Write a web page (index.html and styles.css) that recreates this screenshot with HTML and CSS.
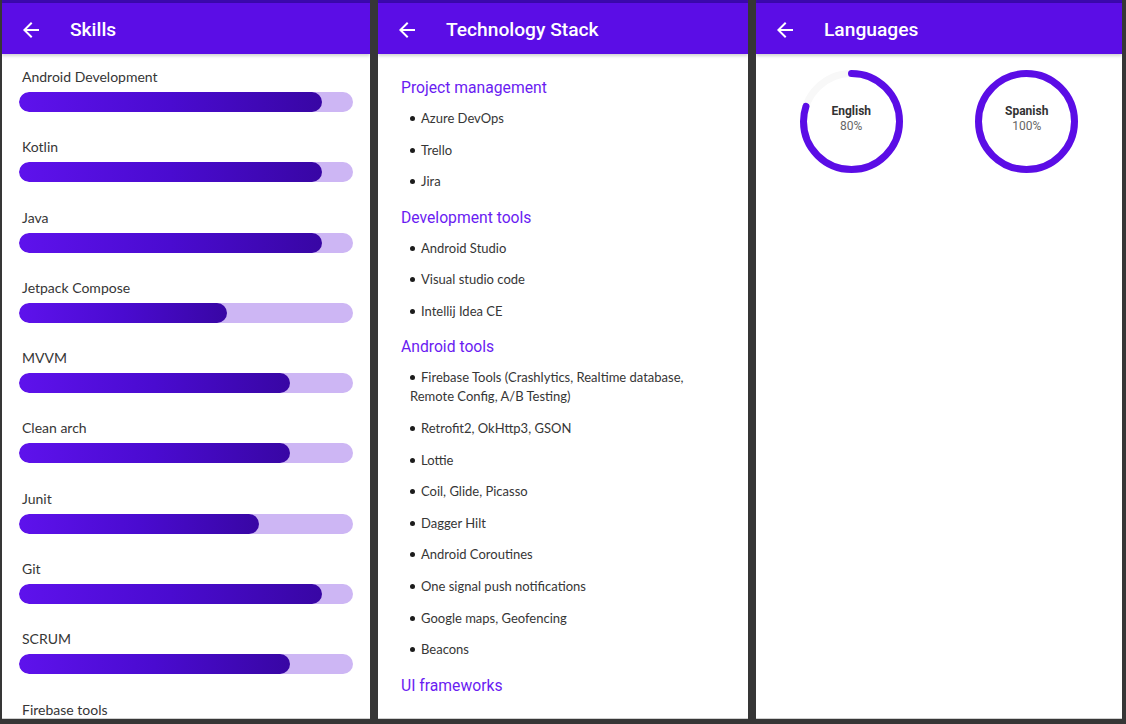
FILE: index.html
```html
<!DOCTYPE html>
<html lang="en">
<head>
<meta charset="utf-8">
<title>Portfolio screens</title>
<link rel="stylesheet" href="styles.css">
</head>
<body>
<div class="screens">
  <section class="panel panel-skills">
    <div class="status"></div>
    <header class="appbar">
      <svg class="back" width="24" height="24" viewBox="0 0 24 24"><path fill="#fff" d="M20 11H7.83l5.59-5.59L12 4l-8 8 8 8 1.41-1.41L7.83 13H20v-2z"/></svg>
      <h1 class="title">Skills</h1>
    </header>
    <div class="skills">
      <div class="skill"><div class="skill-name">Android Development</div><div class="track"><div class="fill" style="width:302.6px"></div></div></div>
      <div class="skill"><div class="skill-name">Kotlin</div><div class="track"><div class="fill" style="width:302.6px"></div></div></div>
      <div class="skill"><div class="skill-name">Java</div><div class="track"><div class="fill" style="width:302.6px"></div></div></div>
      <div class="skill"><div class="skill-name">Jetpack Compose</div><div class="track"><div class="fill" style="width:208.4px"></div></div></div>
      <div class="skill"><div class="skill-name">MVVM</div><div class="track"><div class="fill" style="width:271.2px"></div></div></div>
      <div class="skill"><div class="skill-name">Clean arch</div><div class="track"><div class="fill" style="width:271.2px"></div></div></div>
      <div class="skill"><div class="skill-name">Junit</div><div class="track"><div class="fill" style="width:239.8px"></div></div></div>
      <div class="skill"><div class="skill-name">Git</div><div class="track"><div class="fill" style="width:302.6px"></div></div></div>
      <div class="skill"><div class="skill-name">SCRUM</div><div class="track"><div class="fill" style="width:271.2px"></div></div></div>
      <div class="skill"><div class="skill-name">Firebase tools</div><div class="track"><div class="fill" style="width:271.2px"></div></div></div>
    </div>
  </section>

  <section class="panel panel-stack">
    <div class="status"></div>
    <header class="appbar">
      <svg class="back" width="24" height="24" viewBox="0 0 24 24"><path fill="#fff" d="M20 11H7.83l5.59-5.59L12 4l-8 8 8 8 1.41-1.41L7.83 13H20v-2z"/></svg>
      <h1 class="title">Technology Stack</h1>
    </header>
    <div class="stack">
      <h2 class="group">Project management</h2>
      <ul class="items">
        <li>Azure DevOps</li>
        <li>Trello</li>
        <li>Jira</li>
      </ul>
      <h2 class="group">Development tools</h2>
      <ul class="items">
        <li>Android Studio</li>
        <li>Visual studio code</li>
        <li>Intellij Idea CE</li>
      </ul>
      <h2 class="group">Android tools</h2>
      <ul class="items">
        <li>Firebase Tools (Crashlytics, Realtime database, Remote Config, A/B Testing)</li>
        <li>Retrofit2, OkHttp3, GSON</li>
        <li>Lottie</li>
        <li>Coil, Glide, Picasso</li>
        <li>Dagger Hilt</li>
        <li>Android Coroutines</li>
        <li>One signal push notifications</li>
        <li>Google maps, Geofencing</li>
        <li>Beacons</li>
      </ul>
      <h2 class="group">UI frameworks</h2>
    </div>
  </section>

  <section class="panel panel-lang">
    <div class="status"></div>
    <header class="appbar">
      <svg class="back" width="24" height="24" viewBox="0 0 24 24"><path fill="#fff" d="M20 11H7.83l5.59-5.59L12 4l-8 8 8 8 1.41-1.41L7.83 13H20v-2z"/></svg>
      <h1 class="title">Languages</h1>
    </header>
    <div class="langs">
      <div class="lang">
        <svg class="ring" width="103" height="103" viewBox="0 0 103 103">
          <circle class="ring-track" cx="51.5" cy="51.5" r="48"/>
          <circle class="ring-value" cx="51.5" cy="51.5" r="48" stroke-dasharray="241.3 400" transform="rotate(-90 51.5 51.5)"/>
        </svg>
        <div class="lang-text"><div class="lang-name">English</div><div class="lang-pct">80%</div></div>
      </div>
      <div class="lang">
        <svg class="ring" width="103" height="103" viewBox="0 0 103 103">
          <circle class="ring-track" cx="51.5" cy="51.5" r="48"/>
          <circle class="ring-value" cx="51.5" cy="51.5" r="48" stroke-dasharray="301.6 400" transform="rotate(-90 51.5 51.5)"/>
        </svg>
        <div class="lang-text"><div class="lang-name">Spanish</div><div class="lang-pct">100%</div></div>
      </div>
    </div>
  </section>
</div>
</body>
</html>
```

FILE: styles.css
```css
* { box-sizing: border-box; }
html, body { margin: 0; padding: 0; }
body {
  background: #363636;
  width: 1126px;
  height: 724px;
  overflow: hidden;
  font-family: Roboto, "Liberation Sans", sans-serif;
}
.screens {
  display: flex;
  gap: 8px;
  padding-left: 2px;
}
.panel {
  background: #fff;
  height: 719px;
  overflow: hidden;
  border-bottom: 1px solid #cfcfcf;
  display: flex;
  flex-direction: column;
}
.panel-skills { width: 368px; }
.panel-stack { width: 370px; }
.panel-lang { width: 366px; }

.status {
  height: 3px;
  background: #3a08ac;
  flex: none;
}
.appbar {
  height: 51px;
  flex: none;
  background: #5b0de6;
  display: flex;
  align-items: center;
  padding-left: 17px;
  box-shadow: 0 2px 3px rgba(0,0,0,0.18);
  position: relative;
  z-index: 1;
}
.back { display: block; flex: none; margin-top: 2px; }
.title {
  margin: 0 0 0 27px;
  color: #fff;
  font-family: Roboto, sans-serif;
  font-weight: 500;
  font-size: 19.2px;
  line-height: 24px;
  padding-top: 3px;
}

/* Skills */
.skills {
  padding: 14px 17px 0 17px;
}
.skill {
  height: 70.3px;
}
.skill-name {
  font-family: Lato, "Open Sans", sans-serif;
  font-size: 14px;
  line-height: 18px;
  color: #363636;
  padding-left: 3px;
  margin-bottom: 6px;
}
.track {
  height: 20px;
  border-radius: 10px;
  background: #cdb6f4;
  overflow: hidden;
}
.fill {
  height: 20px;
  border-radius: 10px;
  background: linear-gradient(90deg, #5e12ec 0%, #4a0bd0 50%, #3806a4 100%);
}

/* Stack */
.stack {
  padding: 24px 20px 0 23px;
}
.group {
  margin: 16.5px 0 0 0;
  font-family: Roboto, sans-serif;
  font-weight: 400;
  font-size: 15.7px;
  line-height: 20px;
  color: #6a1cf2;
}
.group:first-child { margin-top: 0; }
.items {
  list-style: none;
  margin: 0;
  padding: 11px 0 0 9px;
  display: flex;
  flex-direction: column;
  gap: 12.6px;
}
.items li {
  font-family: Lato, "Open Sans", sans-serif;
  font-size: 13px;
  line-height: 19px;
  color: #363636;
  max-width: 285px;
}
.items li::before {
  content: "";
  display: inline-block;
  width: 5px;
  height: 5px;
  border-radius: 50%;
  background: #1c1c1c;
  margin-right: 6px;
  vertical-align: 2px;
}

/* Languages */
.langs {
  display: flex;
  justify-content: center;
  gap: 72.5px;
  padding-top: 16px;
}
.lang {
  display: grid;
  width: 103px;
  height: 103px;
}
.lang > * { grid-area: 1 / 1; }
.ring { display: block; }
.ring-track { fill: none; stroke: #f8f8f8; stroke-width: 7; }
.ring-value { fill: none; stroke: #5b0de6; stroke-width: 7; stroke-linecap: round; }
.lang-text {
  align-self: center;
  text-align: center;
  padding-bottom: 6px;
  font-family: Roboto, sans-serif;
  font-size: 12px;
  line-height: 15px;
}
.lang-name { font-weight: 700; color: #333; }
.lang-pct { color: #666; }
```
